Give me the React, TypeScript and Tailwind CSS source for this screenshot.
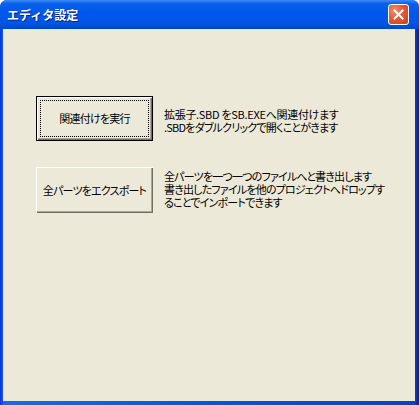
export default function App() {
  const font = { fontFamily: '"Noto Sans CJK JP", "Noto Sans", sans-serif' };

  return (
    <div className="w-[419px] h-[405px] bg-white" style={font}>
      <div className="flex flex-col w-full h-full rounded-t-[7px] overflow-hidden bg-[#0053e1]">
        {/* Title bar */}
        <div className="relative h-[29px] shrink-0 flex items-center px-[7px] bg-[linear-gradient(180deg,#3e8cf6_0%,#0a61ea_12%,#0058ee_40%,#0055e5_80%,#0046cf_100%)]">
          <span className="text-white text-[12px] font-bold leading-none [text-shadow:1px_1px_0_#0a1f7d]">
            エディタ設定
          </span>
          <div className="ml-auto mr-[3px] w-[21px] h-[21px] rounded-[3px] border border-white flex items-center justify-center bg-[radial-gradient(circle_at_30%_30%,#f0906e_0%,#e25a36_45%,#c8401f_100%)]">
            <svg width="11" height="11" viewBox="0 0 11 11">
              <path d="M1.5 1.5 L9.5 9.5 M9.5 1.5 L1.5 9.5" stroke="#fff" strokeWidth="2" strokeLinecap="square" />
            </svg>
          </div>
        </div>

        {/* Body with frame */}
        <div className="flex-1 flex pl-[3px] pr-[4px] pb-[4px] bg-[linear-gradient(90deg,#0831d9_0%,#166aee_1%,#0055e5_50%,#0044cc_99%,#001ea0_100%)]">
          <div className="flex-1 bg-[#ece9d8] flex flex-col pl-[33px] pt-[67px] text-[11px] leading-[13px] tracking-[-0.8px] text-black [font-feature-settings:'palt']">
            {/* Row 1 */}
            <div className="flex items-start">
              <div className="w-[117px] h-[45px] shrink-0 border border-black bg-[#ece9d8] flex items-center justify-center shadow-[inset_1px_1px_0_#ffffff,inset_-1px_-1px_0_#716f64,inset_-2px_-2px_0_#aca899] outline-1 outline-dotted outline-black outline-offset-[-5px]">
                関連付けを実行
              </div>
              <div className="ml-[11px] mt-[12px] whitespace-nowrap">
                <div className="tracking-[-0.3px]">拡張子.SBD をSB.EXEへ関連付けます</div>
                <div>.SBDをダブルクリックで開くことがきます</div>
              </div>
            </div>

            {/* Row 2 */}
            <div className="flex items-start mt-[26px]">
              <div className="w-[117px] h-[46px] shrink-0 bg-[#ece9d8] flex items-center justify-center whitespace-nowrap shadow-[inset_1px_1px_0_#ffffff,inset_-1px_-1px_0_#716f64,inset_-2px_-2px_0_#aca899]">
                全パーツをエクスポート
              </div>
              <div className="ml-[11px] mt-[3px] whitespace-nowrap">
                <div>全パーツを一つ一つのファイルへと書き出します</div>
                <div>書き出したファイルを他のプロジェクトへドロップす</div>
                <div>ることでインポートできます</div>
              </div>
            </div>
          </div>
        </div>
      </div>
    </div>
  );
}
